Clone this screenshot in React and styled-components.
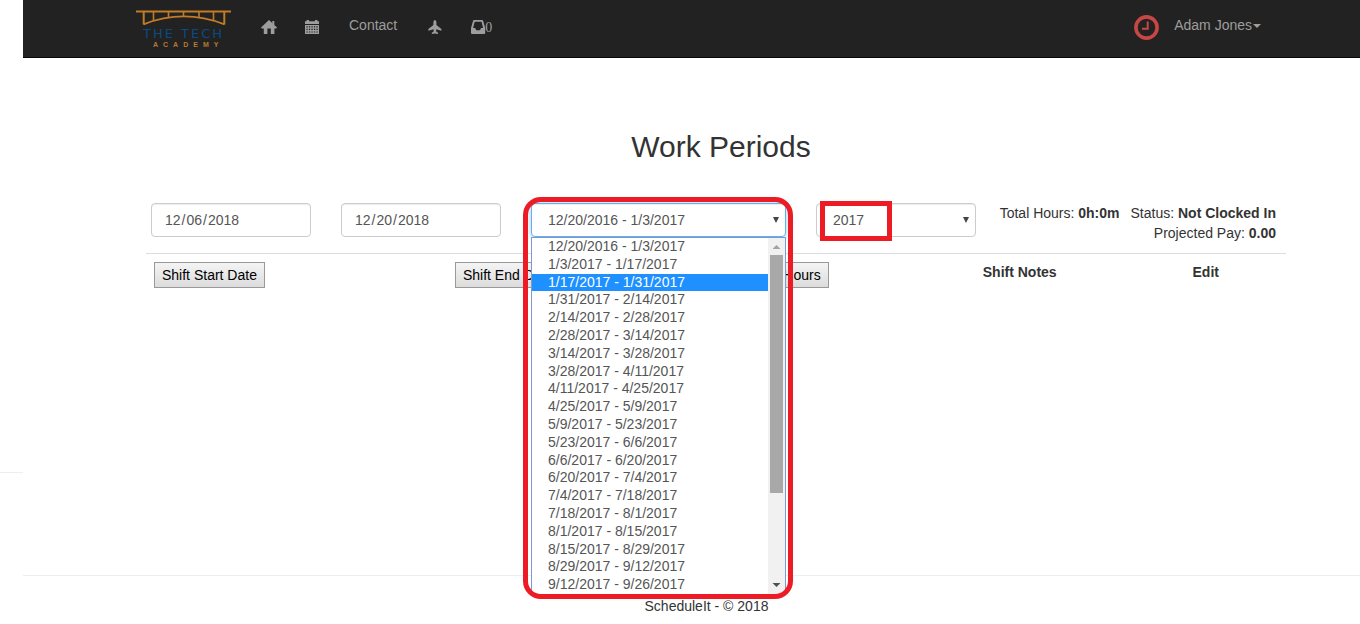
import React, { useState } from "react";
import styled, { createGlobalStyle, css } from "styled-components";

const GlobalStyle = createGlobalStyle`
  *, *::before, *::after { box-sizing: border-box; }
  body {
    margin: 0;
    background: #fff;
    color: #333;
    font-family: "Liberation Sans", Arial, sans-serif;
    font-size: 14px;
    line-height: 20px;
  }
`;

const Page = styled.div`
  display: flex;
  min-height: 100vh;
`;

const Gutter = styled.aside`
  display: flex;
  flex-direction: column;
  flex: 0 0 23px;
  padding-bottom: 151px;
`;

const GutterRule = styled.div`
  flex: 1;
  border-bottom: 1px solid #eee;
`;

const Main = styled.div`
  display: flex;
  flex-direction: column;
  flex: 1;
  min-width: 0;
`;

const Navbar = styled.nav`
  display: flex;
  justify-content: space-between;
  height: 58px;
  padding: 0 84px 0 98px;
  background: #222;
  border-bottom: 1px solid #080808;
`;

const NavGroup = styled.div`
  display: flex;
  align-items: flex-start;
`;

const NavLink = styled.a`
  display: flex;
  align-items: center;
  height: 20px;
  margin-top: ${(p) => (p.$icon ? 17 : 15)}px;
  padding: 0 15px;
  color: #9d9d9d;
  text-decoration: none;
`;

const Brand = styled.a`
  display: block;
  height: 50px;
  padding: 0 15px;
`;

const Glyph = styled.svg`
  display: block;
  width: 14px;
  height: 14px;
  overflow: visible;
  fill: currentColor;
`;

const Count = styled.span`
  padding-top: 2px;
  font-family: "Liberation Serif", "Times New Roman", serif;
`;

const ClockLink = styled.a`
  display: block;
  margin-top: 15px;
  color: #c64744;

  svg {
    display: block;
    width: 25px;
    height: 25px;
  }
`;

const Caret = styled.span`
  margin: 2px 0 0 1px;
  border: 4px solid transparent;
  border-top-color: currentColor;
  border-bottom: 0;
`;

const Content = styled.main`
  flex: 1;
  padding: 72px 74px 0 123px;
`;

const Title = styled.h2`
  margin: 0 0 40px;
  padding-left: 10px;
  font-size: 30px;
  font-weight: 500;
  line-height: 33px;
  text-align: center;
`;

const Filters = styled.div`
  display: flex;
  justify-content: space-between;
  min-height: 50px;
  padding: 0 10px 0 5px;
`;

const Controls = styled.form`
  display: flex;
  gap: 30px;
`;

const control = css`
  display: block;
  width: 100%;
  height: 34px;
  margin: 0;
  border: 1px solid #ccc;
  border-radius: 4px;
  background: #fff;
  box-shadow: inset 0 1px 1px rgba(0, 0, 0, 0.075);
  color: #555;
  font: 14px/20px "Liberation Sans", Arial, sans-serif;
  outline: none;
`;

const Field = styled.div`
  position: relative;
  flex: 0 0 ${(p) => (p.$wide ? 255 : 160)}px;
`;

const SelectField = styled(Field)`
  &::after {
    content: "";
    position: absolute;
    top: 14px;
    right: 7px;
    border: 3px solid transparent;
    border-top: 6px solid #444;
    border-bottom: 0;
    pointer-events: none;
  }
`;

const DateInput = styled.input`
  ${control}
  padding: 6px 12px;

  &::-webkit-calendar-picker-indicator { display: none; }
`;

const Select = styled.select`
  ${control}
  appearance: none;
  padding: 6px 16px;
  ${(p) =>
    p.$open &&
    css`
      border-color: #66afe9;
      box-shadow: inset 0 1px 1px rgba(0, 0, 0, 0.075), 0 0 8px rgba(102, 175, 233, 0.6);
    `}
`;

const Popup = styled.div`
  position: absolute;
  z-index: 2;
  top: 34px;
  left: 0;
  right: 0;
  display: flex;
  height: 358px;
  border: 1px solid #7b9ad0;
  background: #fff;
`;

const OptionList = styled.ul`
  display: grid;
  grid-template-rows: repeat(20, 1fr);
  flex: 1;
  margin: 0;
  padding: 0;
  list-style: none;
`;

const Option = styled.li`
  min-height: 0;
  padding-left: 16px;
  line-height: 16px;
  cursor: default;
  color: ${(p) => (p.$active ? "#fff" : "#555")};
  background: ${(p) => (p.$active ? "#1e90ff" : "transparent")};
`;

const Scrollbar = styled.div`
  display: flex;
  flex-direction: column;
  align-items: center;
  flex: 0 0 17px;
  background: #f1f1f1;
`;

const ScrollArrow = styled.svg`
  display: block;
  width: 17px;
  height: 17px;
  fill: ${(p) => (p.$disabled ? "#a3a3a3" : "#505050")};
`;

const ScrollTrack = styled.div`
  flex: 1;
`;

const ScrollThumb = styled.div`
  width: 13px;
  height: 238px;
  background: #a8a8a8;
`;

const Highlight = styled.div`
  position: absolute;
  z-index: 3;
  border: 5px solid #ed1c24;
  pointer-events: none;
`;

const PeriodHighlight = styled(Highlight)`
  top: -6px;
  left: -8px;
  right: -7px;
  height: 402px;
  border-radius: 18px;
`;

const YearHighlight = styled(Highlight)`
  top: -2px;
  left: 4px;
  width: 72px;
  height: 40px;
`;

const Summary = styled.div`
  text-align: right;
  white-space: nowrap;
`;

const SummaryLine = styled.div`
  display: flex;
  justify-content: flex-end;
  gap: 11px;
`;

const ShiftTable = styled.table`
  width: 100%;
  table-layout: fixed;
  border-collapse: separate;
  border-spacing: 0;
  border-top: 1px solid #ddd;
`;

const HeadCell = styled.th`
  width: ${(p) => p.$width};
  padding: 8px;
  text-align: left;
  vertical-align: top;
  font-weight: 700;
`;

const SortButton = styled.button`
  display: block;
  height: 26px;
  margin: 0;
  padding: 0 7px;
  border: 1px solid #999;
  border-radius: 0;
  background: linear-gradient(#f4f4f4, #dcdcdc);
  color: #000;
  font: 14px/20px "Liberation Sans", Arial, sans-serif;
  white-space: nowrap;
`;

const Footer = styled.footer`
  height: 49px;
  padding: 20px 0 0 30px;
  border-top: 1px solid #eee;
  text-align: center;
`;

const Bridge = styled.svg`
  display: block;
  width: 95px;
  height: 50px;
`;

const periods = [
  "12/20/2016 - 1/3/2017",
  "1/3/2017 - 1/17/2017",
  "1/17/2017 - 1/31/2017",
  "1/31/2017 - 2/14/2017",
  "2/14/2017 - 2/28/2017",
  "2/28/2017 - 3/14/2017",
  "3/14/2017 - 3/28/2017",
  "3/28/2017 - 4/11/2017",
  "4/11/2017 - 4/25/2017",
  "4/25/2017 - 5/9/2017",
  "5/9/2017 - 5/23/2017",
  "5/23/2017 - 6/6/2017",
  "6/6/2017 - 6/20/2017",
  "6/20/2017 - 7/4/2017",
  "7/4/2017 - 7/18/2017",
  "7/18/2017 - 8/1/2017",
  "8/1/2017 - 8/15/2017",
  "8/15/2017 - 8/29/2017",
  "8/29/2017 - 9/12/2017",
  "9/12/2017 - 9/26/2017",
];

function Logo() {
  return (
    <Bridge viewBox="0 0 95 50" role="img" aria-label="The Tech Academy">
      <g fill="none" stroke="#c27c25">
        <path d="M0 11.5H95" strokeWidth="2" />
        <path d="M7.7 12V24.5M88.3 12V24.5" strokeWidth="2" />
        <path d="M17.5 12V20.5M32.5 12V17.5M47.5 12V16.5M63 12V17.5M77.5 12V20.5" strokeWidth="1.6" />
        <path d="M7.5 24.3Q47.5 8.5 88.5 24.3" strokeWidth="1.8" />
      </g>
      <text x="7" y="38" fill="#0b4a80" fontFamily="DejaVu Sans" fontSize="13" letterSpacing="2">
        THE TECH
      </text>
      <text x="17" y="47" fill="#b87a30" fontFamily="Liberation Sans" fontWeight="700" fontSize="7" letterSpacing="5">
        ACADEMY
      </text>
    </Bridge>
  );
}

function HomeIcon() {
  return (
    <Glyph viewBox="0 0 14 14" aria-hidden="true">
      <path d="M8 0L16 7.6 15.3 8.4H13.4V14H9.8V8.6H6.4V14H2.8V8.4H.8L0 7.6 5.6 2.2 7.4.4Z" />
      <path d="M11.3 1H13.3V5H11.3Z" />
    </Glyph>
  );
}

function CalendarIcon() {
  return (
    <Glyph viewBox="0 0 14 14" aria-hidden="true">
      <path d="M0 1.2H1.6V0H4V1.2H10V0H12.4V1.2H14V4H0Z" />
      <path
        fillRule="evenodd"
        d="M0 5H14V14H0ZM1.4 6.3V7.4H2.7V6.3ZM3.9 6.3V7.4H5.2V6.3ZM6.4 6.3V7.4H7.7V6.3ZM8.9 6.3V7.4H10.2V6.3ZM11.4 6.3V7.4H12.7V6.3ZM1.4 8.8V10H2.7V8.8ZM3.9 8.8V10H5.2V8.8ZM6.4 8.8V10H7.7V8.8ZM8.9 8.8V10H10.2V8.8ZM11.4 8.8V10H12.7V8.8ZM1.4 11.4V12.6H2.7V11.4ZM3.9 11.4V12.6H5.2V11.4ZM6.4 11.4V12.6H7.7V11.4ZM8.9 11.4V12.6H10.2V11.4ZM11.4 11.4V12.6H12.7V11.4Z"
      />
    </Glyph>
  );
}

function PlaneIcon() {
  return (
    <Glyph viewBox="0 0 14 14" aria-hidden="true">
      <path d="M7.9 0Q9.4 .6 9.4 2.2V4.9L14.4 9V10.8L9.2 9.2V11.4L11 12.8V14L7.9 13.4 4.8 14V12.8L6.6 11.4V9.2L1.4 10.8V9L6.4 4.9V2.2Q6.4.6 7.9 0Z" />
    </Glyph>
  );
}

function InboxIcon() {
  return (
    <Glyph viewBox="0 0 14 14" aria-hidden="true">
      <path
        fillRule="evenodd"
        d="M3 0H11.2Q11.9 0 12.1.8L14.2 8V13Q14.2 14 13.2 14H1Q0 14 0 13V8L2.1.8Q2.3 0 3 0ZM3.7 1.7L2.1 8.1H4.2L5.2 10.2H9L10 8.1H12.1L10.5 1.7Z"
      />
    </Glyph>
  );
}

function ClockIcon() {
  return (
    <svg viewBox="0 0 25 25" aria-hidden="true" fill="none" stroke="currentColor">
      <circle cx="12.5" cy="12.5" r="10.6" strokeWidth="3.6" />
      <path d="M13.7 6.5V13.7H8" strokeWidth="2" />
    </svg>
  );
}

export default function App() {
  const [start, setStart] = useState("2018-12-06");
  const [end, setEnd] = useState("2018-12-20");
  const [period, setPeriod] = useState(periods[0]);
  const [active, setActive] = useState(2);

  return (
    <Page>
      <GlobalStyle />
      <Gutter>
        <GutterRule />
      </Gutter>
      <Main>
        <Navbar>
          <NavGroup>
            <Brand href="#"><Logo /></Brand>
            <NavLink href="#" $icon aria-label="Home"><HomeIcon /></NavLink>
            <NavLink href="#" $icon aria-label="Calendar"><CalendarIcon /></NavLink>
            <NavLink href="#">Contact</NavLink>
            <NavLink href="#" $icon aria-label="Time off"><PlaneIcon /></NavLink>
            <NavLink href="#" $icon aria-label="Messages"><InboxIcon /><Count>0</Count></NavLink>
          </NavGroup>
          <NavGroup>
            <ClockLink href="#" aria-label="Clock in"><ClockIcon /></ClockLink>
            <NavLink href="#">Adam Jones<Caret /></NavLink>
          </NavGroup>
        </Navbar>

        <Content>
          <Title>Work Periods</Title>
          <Filters>
            <Controls>
              <Field>
                <DateInput type="date" aria-label="Start date" value={start} onChange={(e) => setStart(e.target.value)} />
              </Field>
              <Field>
                <DateInput type="date" aria-label="End date" value={end} onChange={(e) => setEnd(e.target.value)} />
              </Field>
              <SelectField $wide>
                <Select $open aria-label="Pay period" value={period} onChange={(e) => setPeriod(e.target.value)}>
                  {periods.map((p) => <option key={p}>{p}</option>)}
                </Select>
                <Popup>
                  <OptionList role="listbox" aria-label="Pay periods">
                    {periods.map((p, i) => (
                      <Option
                        key={p}
                        role="option"
                        aria-selected={i === active}
                        $active={i === active}
                        onMouseEnter={() => setActive(i)}
                        onClick={() => setPeriod(p)}
                      >
                        {p}
                      </Option>
                    ))}
                  </OptionList>
                  <Scrollbar aria-hidden="true">
                    <ScrollArrow $disabled viewBox="0 0 17 17"><path d="M4.5 11L8.5 7L12.5 11Z" /></ScrollArrow>
                    <ScrollTrack><ScrollThumb /></ScrollTrack>
                    <ScrollArrow viewBox="0 0 17 17"><path d="M4.5 6L8.5 10L12.5 6Z" /></ScrollArrow>
                  </Scrollbar>
                </Popup>
                <PeriodHighlight />
              </SelectField>
              <SelectField>
                <Select aria-label="Year" defaultValue="2017">
                  <option>2016</option>
                  <option>2017</option>
                  <option>2018</option>
                </Select>
                <YearHighlight />
              </SelectField>
            </Controls>
            <Summary>
              <SummaryLine>
                <span>Total Hours: <b>0h:0m</b></span>
                <span>Status: <b>Not Clocked In</b></span>
              </SummaryLine>
              <SummaryLine>
                <span>Projected Pay: <b>0.00</b></span>
              </SummaryLine>
            </Summary>
          </Filters>
          <ShiftTable>
            <thead>
              <tr>
                <HeadCell $width="26.4%"><SortButton type="button">Shift Start Date</SortButton></HeadCell>
                <HeadCell $width="28.1%"><SortButton type="button">Shift End Date</SortButton></HeadCell>
                <HeadCell $width="18.2%"><SortButton type="button">Hours</SortButton></HeadCell>
                <HeadCell $width="18.4%">Shift Notes</HeadCell>
                <HeadCell>Edit</HeadCell>
              </tr>
            </thead>
          </ShiftTable>
        </Content>

        <Footer>ScheduleIt - © 2018</Footer>
      </Main>
    </Page>
  );
}
